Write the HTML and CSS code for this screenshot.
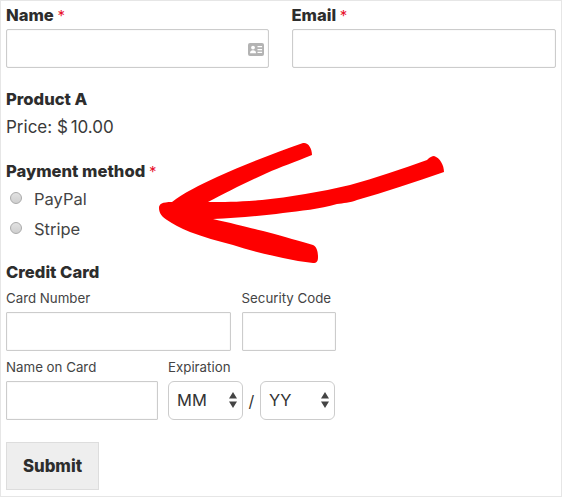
FILE: index.html
```html
<!DOCTYPE html>
<html lang="en">
<head>
  <meta charset="UTF-8" />
  <title>Payment form</title>
  <meta name="viewport" content="width=device-width, initial-scale=1.0" />
  <link rel="stylesheet" href="styles.css">
</head>
<body>
  <form class="form">
    <div class="row row-top">
      <div class="field field-name-top">
        <label class="label">Name <span class="req">*</span></label>
        <div class="input-wrap">
          <input class="input" type="text" />
          <svg class="card-icon" viewBox="0 0 16 13" width="16" height="13">
            <rect width="16" height="13" rx="2" fill="#b3b3b3" />
            <circle cx="5" cy="4.6" r="1.9" fill="#fff" />
            <path d="M2 10.2c0-2 1.2-3 3-3s3 1 3 3z" fill="#fff" />
            <path d="M9.5 3h4.6v1.3H9.5zM9.5 5.9h4.6v1.3H9.5zM9.5 8.8h4.6v1.3H9.5z" fill="#fff" />
          </svg>
        </div>
      </div>
      <div class="field field-email">
        <label class="label">Email <span class="req">*</span></label>
        <input class="input" type="email" />
      </div>
    </div>

    <h3 class="product">Product A</h3>
    <p class="price">Price: <span class="amount">$ 10.00</span></p>

    <div class="label payment-label">Payment method <span class="req">*</span></div>
    <label class="choice"><input class="radio" type="radio" name="pay" /> PayPal</label>
    <label class="choice"><input class="radio" type="radio" name="pay" /> Stripe</label>

    <div class="label card-title">Credit Card</div>
    <div class="row row-card">
      <div class="field field-number">
        <label class="sublabel">Card Number</label>
        <input class="input input-card" type="text" />
      </div>
      <div class="field field-code">
        <label class="sublabel">Security Code</label>
        <input class="input input-card" type="text" />
      </div>
    </div>
    <div class="row row-name">
      <div class="field field-name">
        <label class="sublabel">Name on Card</label>
        <input class="input input-card" type="text" />
      </div>
      <div class="field">
        <label class="sublabel">Expiration</label>
        <div class="expiry">
          <div class="select">MM
            <svg class="updown" viewBox="0 0 8 16" width="8" height="16"><path d="M4 0l4 6.5H0zM4 16L0 9.5h8z" fill="#444" /></svg>
          </div>
          <span class="slash">/</span>
          <div class="select">YY
            <svg class="updown" viewBox="0 0 8 16" width="8" height="16"><path d="M4 0l4 6.5H0zM4 16L0 9.5h8z" fill="#444" /></svg>
          </div>
        </div>
      </div>
    </div>

    <button class="submit" type="button">Submit</button>
  </form>

  <svg class="arrow" viewBox="0 0 562 497" width="562" height="497">
    <path fill="#fe0000" d="M159 208C159 204 162 202 172 202C183 193 200 185 217 177C245 164 275 153 303 143C308 142 312 148 312 155C295 162 280 167 267 173C247 182 225 193 208 202C225 202 240 202 262 200C290 197 320 192 350 185C375 178 402 169 427 160C430 157 432 156 434 156C440 158 444 165 444 172C415 182 385 192 357 200C350 203 343 203 337 204C320 209 300 211 283 213C262 216 235 218 213 219C235 224 255 229 267 232C285 237 300 241 313 245C317 247 318 252 318 257C318 261 317 263 313 263C303 262 293 260 283 258C265 254 248 250 233 245C218 241 203 237 190 232C180 228 173 224 167 220C162 217 159 213 159 208Z" />
  </svg>
</body>
</html>
```

FILE: styles.css
```css
* {
  box-sizing: border-box;
}

body {
  margin: 0;
  font-family: "Inter", "Liberation Sans", sans-serif;
  color: #333;
  background: #fff;
}

.form {
  position: relative;
  height: 497px;
  padding: 5px 5px 0 5px;
  border: 1px solid #e6e6e6;
}

.row {
  display: flex;
}

.row-top {
  gap: 22.5px;
}

.field-name-top {
  width: 263px;
}

.field-email {
  flex: 1;
}

.label {
  display: block;
  height: 18px;
  font-size: 16.6px;
  font-weight: 800;
  line-height: 18px;
  color: #2d2d2d;
}

.req {
  color: #e8112d;
  font-size: 15px;
  font-weight: 400;
  line-height: 1;
}

.input {
  display: block;
  width: 100%;
  height: 39px;
  border: 1px solid #ccc;
  border-radius: 2px;
  background: #fff;
  box-shadow: inset 0 0 1px #ccc;
}

.row-top .label {
  margin-bottom: 5px;
}

.input-wrap {
  position: relative;
}

.card-icon {
  position: absolute;
  right: 5px;
  top: 14px;
}

.product {
  margin: 22px 0 0 0;
  font-size: 16.6px;
  font-weight: 800;
  line-height: 18px;
  color: #2d2d2d;
}

.price {
  margin: 10px 0 0 0;
  font-size: 17px;
  line-height: 18px;
  color: #3a3a3a;
}

.amount {
  word-spacing: -2px;
}

.payment-label {
  margin-top: 26px;
}

.choice {
  display: flex;
  align-items: center;
  height: 30px;
  font-size: 16.5px;
  color: #444;
  margin-left: 4px;
}

.payment-label + .choice {
  margin-top: 4px;
}

.radio {
  appearance: none;
  width: 12px;
  height: 12px;
  margin: 0 12px 2px 0;
  border: 1px solid #aaa;
  border-radius: 50%;
  background: linear-gradient(#e2e2e2, #cfcfcf);
}

.card-title {
  margin-top: 19px;
}

.row-card {
  margin-top: 9px;
  gap: 11px;
}

.field-number {
  width: 224.5px;
}

.field-code {
  width: 94px;
}

.sublabel {
  display: block;
  font-size: 13.3px;
  line-height: 16px;
  margin-bottom: 6px;
  color: #444;
  white-space: nowrap;
}

.input-card {
  border-radius: 1px;
}

.row-name {
  margin-top: 8px;
  gap: 10.5px;
}

.field-name {
  width: 151.5px;
}

.expiry {
  display: flex;
  align-items: center;
}

.select {
  position: relative;
  width: 75px;
  height: 39px;
  padding-left: 8px;
  border: 1px solid #ccc;
  border-radius: 6px;
  font-size: 16.5px;
  line-height: 37px;
  color: #333;
}

.updown {
  position: absolute;
  right: 5px;
  top: 10px;
}

.slash {
  width: 17px;
  text-align: center;
  font-size: 16px;
}

.submit {
  display: block;
  margin-top: 22px;
  width: 93px;
  height: 48px;
  padding: 0;
  background: #eee;
  border: 1px solid #ddd;
  font-family: inherit;
  font-size: 16.8px;
  font-weight: 800;
  color: #2d2d2d;
}

.arrow {
  position: absolute;
  left: 0;
  top: 0;
  pointer-events: none;
}
```
